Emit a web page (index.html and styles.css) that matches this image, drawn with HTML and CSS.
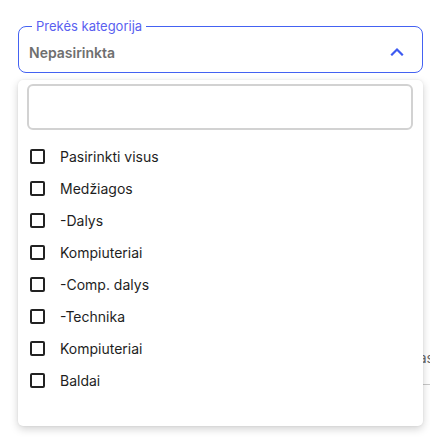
FILE: index.html
```html
<!DOCTYPE html>
<html lang="lt">
<head>
<meta charset="utf-8">
<title>Prekės kategorija</title>
<link rel="stylesheet" href="styles.css">
</head>
<body>
<div class="page">
  <fieldset class="field">
    <legend class="field-label">Prekės kategorija</legend>
    <div class="field-value">
      <span class="value-text">Nepasirinkta</span>
      <svg class="chevron" width="14" height="9" viewBox="0 0 14 9"><path d="M2 7.5 L7 2.5 L12 7.5" fill="none" stroke="#3d5af1" stroke-width="2.2" stroke-linecap="square"/></svg>
    </div>
  </fieldset>
  <div class="under">
    <div class="under-row"><span class="under-text">Rūšiuoti pagal kainas</span></div>
  </div>
  <div class="menu">
    <div class="search"></div>
    <ul class="options">
      <li class="option"><span class="box"></span><span>Pasirinkti visus</span></li>
      <li class="option"><span class="box"></span><span>Medžiagos</span></li>
      <li class="option"><span class="box"></span><span>-Dalys</span></li>
      <li class="option"><span class="box"></span><span>Kompiuteriai</span></li>
      <li class="option"><span class="box"></span><span>-Comp. dalys</span></li>
      <li class="option"><span class="box"></span><span>-Technika</span></li>
      <li class="option"><span class="box"></span><span>Kompiuteriai</span></li>
      <li class="option"><span class="box"></span><span>Baldai</span></li>
    </ul>
  </div>
</div>
</body>
</html>
```

FILE: styles.css
```css
* { box-sizing: border-box; }
html, body { margin: 0; padding: 0; background: #fff; }
body { font-family: Inter, "Noto Sans", sans-serif; width: 430px; height: 438px; overflow: hidden; }
.page { position: relative; padding: 18px 7px 0 18px; height: 438px; }
.field {
  margin: 0;
  padding: 0 10px 0 10px;
  border: 1px solid #4462f2;
  border-radius: 8px;
  min-width: 0;
  width: 405px;
}
.field-label {
  margin-left: 3px;
  padding: 0 4px;
  font-size: 13px;
  line-height: 16px;
  color: #5a5ff0;
  font-weight: 400;
}
.field-value {
  height: 38px;
  display: flex;
  align-items: center;
  justify-content: space-between;
  padding-bottom: 2px;
}
.value-text { font-size: 14px; font-weight: 600; color: #6f6f6f; }
.chevron { margin-right: 8px; margin-top: -2px; }
.under { margin-top: 274px; }
.under-row {
  display: flex;
  justify-content: flex-end;
  height: 38px;
  border-bottom: 1px solid #c8c8c8;
  margin-right: -7px;
  padding-top: 2px;
}
.under-text { font-size: 14px; color: #666; margin-right: -4px; }
.menu {
  position: absolute;
  left: 18px;
  top: 80px;
  width: 405px;
  height: 346px;
  background: #fff;
  border-radius: 5px;
  box-shadow: 0 3px 8px rgba(0,0,0,0.18), 0 0 2px rgba(0,0,0,0.08);
  padding: 4px 10px 0 9px;
}
.search {
  height: 46px;
  border: 2px solid #d2d2d2;
  border-radius: 6px;
}
.options { list-style: none; margin: 0; padding: 10px 0 0 3px; }
.option {
  height: 32px;
  display: flex;
  align-items: center;
  gap: 15px;
  font-size: 14px;
  font-weight: 400;
  color: #1e1e1e;
}
.box {
  width: 15px;
  height: 15px;
  border: 2px solid #222;
  border-radius: 2px;
  flex: none;
}
```
